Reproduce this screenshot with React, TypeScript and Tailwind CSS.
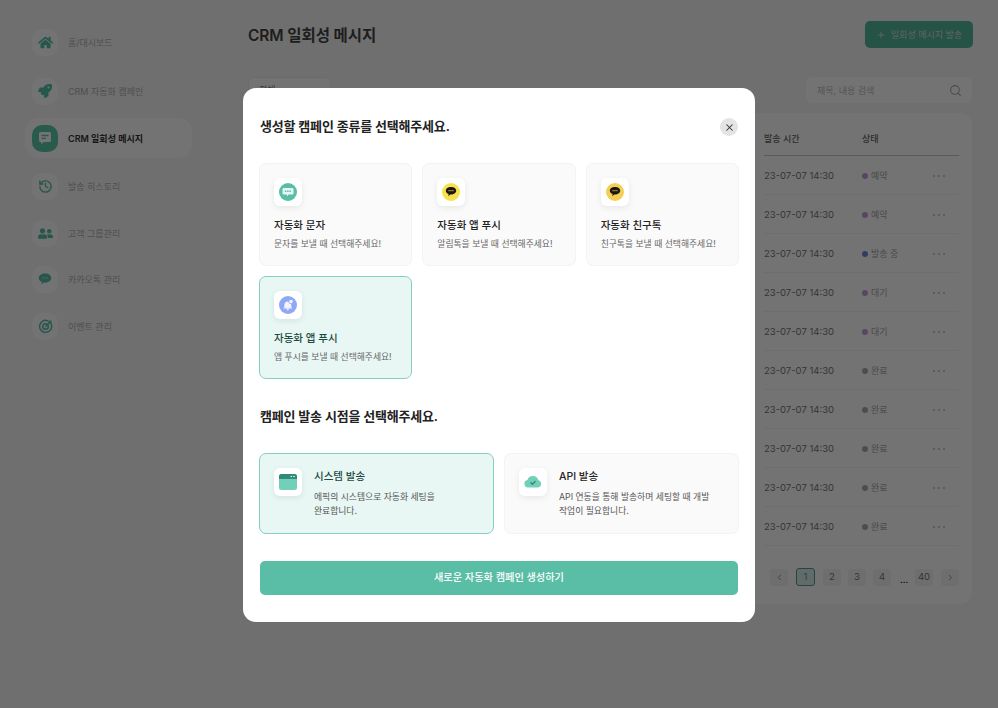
import { useState } from 'react';
import { Plus, Search, X, ChevronLeft, ChevronRight, History } from 'lucide-react';
import { FaHome, FaRocket, FaUserFriends } from 'react-icons/fa';

const font = { fontFamily: 'Inter, "Noto Sans CJK KR", sans-serif' };

const Message = () => (
  <svg width="16" height="16" viewBox="0 0 16 16">
    <path d="M3.500 2h9A1.500 1.500 0 0 1 14 3.500v7a1.500 1.500 0 0 1-1.500 1.500H7l-3 2v-2h-.5A1.500 1.500 0 0 1 2 10.500v-7A1.500 1.500 0 0 1 3.500 2z" fill="#fff" />
    <path d="M5 5.500h6M5 8.300h3.500" stroke="#5cc9ab" strokeWidth="1.300" strokeLinecap="round" />
  </svg>
);

const TalkBubble = () => (
  <svg width="14" height="14" viewBox="0 0 14 14">
    <path d="M7 1.500c3.500 0 6.300 2 6.300 4.600S10.500 10.700 7 10.700c-.5 0-1 0-1.400-.1L3.500 12.600l.3-2.500C1.900 9.300.7 7.800.7 6.100.7 3.500 3.500 1.500 7 1.500z" fill="#55c0a4" />
    <path d="M4 6h6" stroke="#cfeee5" strokeWidth="1.200" strokeDasharray="1.500 .8" />
  </svg>
);

const Aim = () => (
  <svg width="15" height="15" viewBox="0 0 15 15" fill="none" stroke="#55c0a4" strokeWidth="1.500" strokeLinecap="round">
    <path d="M9.500 1.700A6 6 0 1 0 13.300 5.500" />
    <circle cx="7.500" cy="7.500" r="2.800" />
    <path d="M7.500 7.500L13 2M11 1.800v2.200h2.200" strokeWidth="1.300" />
  </svg>
);

const menu = [
  { label: '홈/대시보드', icon: <FaHome size={15} color="#55c0a4" />, mt: 'mt-0' },
  { label: 'CRM 자동화 캠페인', icon: <FaRocket size={14} color="#55c0a4" />, mt: 'mt-[9px]' },
  { label: 'CRM 일회성 메시지', icon: <Message />, mt: 'mt-[7px]', active: true },
  { label: '발송 히스토리', icon: <History size={15} color="#55c0a4" strokeWidth={2.2} />, mt: 'mt-[8px]' },
  { label: '고객 그룹관리', icon: <FaUserFriends size={15} color="#55c0a4" />, mt: 'mt-[7px]' },
  { label: '카카오톡 관리', icon: <TalkBubble />, mt: 'mt-[6px]' },
  { label: '이벤트 관리', icon: <Aim />, mt: 'mt-[7px]' },
];

const statuses = [
  { label: '예약', dot: 'bg-[#c79ae0]' },
  { label: '예약', dot: 'bg-[#c79ae0]' },
  { label: '발송 중', dot: 'bg-[#6a86e0]' },
  { label: '대기', dot: 'bg-[#c79ae0]' },
  { label: '대기', dot: 'bg-[#c79ae0]' },
  { label: '완료', dot: 'bg-[#aaaaaa]' },
  { label: '완료', dot: 'bg-[#aaaaaa]' },
  { label: '완료', dot: 'bg-[#aaaaaa]' },
  { label: '완료', dot: 'bg-[#aaaaaa]' },
  { label: '완료', dot: 'bg-[#aaaaaa]' },
];

const Sidebar = () => (
  <aside className="w-[248px] shrink-0 pt-[22px] pl-[25px]">
    {menu.map((m) => (
      <div
        key={m.label}
        className={`flex items-center gap-[10px] pl-[7px] w-[167px] h-[40px] ${m.mt} ${m.active ? 'bg-white rounded-[14px]' : ''}`}
      >
        <div
          className={`w-[26px] h-[27px] rounded-[10px] flex items-center justify-center ${
            m.active ? 'bg-[#5cc9ab]' : 'bg-white'
          }`}
        >
          {m.icon}
        </div>
        <span className={`pt-[2px] text-[9px] ${m.active ? 'text-[#333] font-semibold' : 'text-[#b0b0b0]'}`}>{m.label}</span>
      </div>
    ))}
  </aside>
);

const Table = () => (
  <div className="mt-[10px] w-[724px] h-[491px] bg-white rounded-[12px] pl-[516px] pr-[13px] pt-[19px]">
    <div className="flex h-[24px] border-b border-[#c8c8c8] text-[9px] leading-[14px] text-[#666] font-medium">
      <span className="w-[98px]">발송 시간</span>
      <span>상태</span>
    </div>
    {statuses.map((s, i) => (
      <div key={i} className="flex items-center h-[39px] pt-[2px] border-b border-[#f1f1f1] text-[9.5px] text-[#777]">
        <span className="w-[98px]">23-07-07 14:30</span>
        <span className={`w-[6px] h-[6px] rounded-full ${s.dot}`} />
        <span className="ml-[3px] w-[62px] text-[9px] text-[#a6a6a6]">{s.label}</span>
        <span className="flex gap-[3px]">
          <i className="w-[2px] h-[2px] rounded-full bg-[#bbb]" />
          <i className="w-[2px] h-[2px] rounded-full bg-[#bbb]" />
          <i className="w-[2px] h-[2px] rounded-full bg-[#bbb]" />
        </span>
      </div>
    ))}
    <div className="flex items-center mt-[22px] ml-[6px] text-[9.5px] text-[#777]">
      <span className="w-[18px] h-[17px] rounded-[3px] bg-[#f4f4f4] flex items-center justify-center"><ChevronLeft size={9} /></span>
      <span className="ml-[8px] w-[19px] h-[18px] rounded-[3px] bg-[#dceeea] border border-[#4a9d8b] text-[#4a9d8b] flex items-center justify-center">1</span>
      <span className="ml-[8px] w-[18px] h-[17px] rounded-[3px] bg-[#f4f4f4] flex items-center justify-center">2</span>
      <span className="ml-[7px] w-[18px] h-[17px] rounded-[3px] bg-[#f4f4f4] flex items-center justify-center">3</span>
      <span className="ml-[7px] w-[18px] h-[17px] rounded-[3px] bg-[#f4f4f4] flex items-center justify-center">4</span>
      <span className="w-[24px] pl-[9px] text-black self-end leading-[12px]">...</span>
      <span className="w-[18px] h-[17px] rounded-[3px] bg-[#f4f4f4] flex items-center justify-center">40</span>
      <span className="ml-[8px] w-[18px] h-[17px] rounded-[3px] bg-[#f4f4f4] flex items-center justify-center"><ChevronRight size={9} /></span>
    </div>
  </div>
);

const IconBox = ({ children }: { children: React.ReactNode }) => (
  <div className="w-[28px] h-[28px] rounded-[6px] bg-white shadow-[0_2px_6px_rgba(0,0,0,0.08)] flex items-center justify-center shrink-0">
    {children}
  </div>
);

const Sms = () => (
  <svg width="18" height="18" viewBox="0 0 18 18">
    <circle cx="9" cy="9" r="9" fill="#5abda6" />
    <path d="M4.500 5h9a1 1 0 0 1 1 1v4.500a1 1 0 0 1-1 1H9.500L8 13.500v-2H4.500a1 1 0 0 1-1-1V6a1 1 0 0 1 1-1z" fill="#e6f6f2" />
    <path d="M5.800 8.200h6.400" stroke="#5abda6" strokeWidth="1.600" strokeDasharray="1.500 .8" />
  </svg>
);

const Kakao = ({ bg }: { bg: string }) => (
  <svg width="18" height="18" viewBox="0 0 18 18">
    <circle cx="9" cy="9" r="9" fill={bg} />
    <path d="M9 4c2.900 0 5.200 1.600 5.200 3.700S11.900 11.400 9 11.400h-.8L6.300 13.300l.3-2.300C5 10.400 3.800 9.200 3.800 7.700 3.800 5.600 6.100 4 9 4z" fill="#1c1710" />
    <path d="M6.500 7.700h5" stroke={bg} strokeWidth="1" strokeDasharray="1.200 .7" />
  </svg>
);

const Bell = () => (
  <svg width="18" height="18" viewBox="0 0 18 18">
    <circle cx="9" cy="9" r="9" fill="#8fa8f5" />
    <path d="M8.800 5.600c-2.200 0-3.500 1.700-3.500 3.700v1.800l-1 1.400h9l-1-1.400V9.300c0-2-1.300-3.700-3.500-3.700z" fill="#f1f4ff" />
    <circle cx="12" cy="5.600" r="2.500" fill="#8fa8f5" />
    <circle cx="12" cy="5.600" r="1.800" fill="#f1f4ff" />
    <circle cx="8.800" cy="13.300" r="1.100" fill="#f1f4ff" />
  </svg>
);

const BrowserIcon = () => (
  <svg width="18" height="18" viewBox="0 0 18 18">
    <rect y="1" width="18" height="16" rx="2.500" fill="#72cfb8" />
    <path d="M0 6V3.500A2.500 2.500 0 0 1 2.500 1h13A2.500 2.500 0 0 1 18 3.500V6z" fill="#2f8a77" />
    <circle cx="12.300" cy="3.500" r=".8" fill="#e8f7f4" />
    <circle cx="15" cy="3.500" r=".8" fill="#e8f7f4" />
  </svg>
);

const CloudCheck = () => (
  <svg width="18" height="18" viewBox="0 0 18 18">
    <path d="M4 14.500a3.800 3.800 0 0 1-.6-7.500 5.700 5.700 0 0 1 11 .3A3.700 3.700 0 0 1 14 14.500z" fill="#72cfb8" />
    <path d="M6.800 9.800l1.600 1.500 2.800-2.800" stroke="#2f8a77" strokeWidth="1.300" fill="none" strokeLinecap="round" strokeLinejoin="round" />
  </svg>
);

const types = [
  { title: '자동화 문자', desc: '문자를 보낼 때 선택해주세요!', icon: <Sms /> },
  { title: '자동화 앱 푸시', desc: '알림톡을 보낼 때 선택해주세요!', icon: <Kakao bg="#f7e14e" /> },
  { title: '자동화 친구톡', desc: '친구톡을 보낼 때 선택해주세요!', icon: <Kakao bg="#f5cf55" /> },
  { title: '자동화 앱 푸시', desc: '앱 푸시를 보낼 때 선택해주세요!', icon: <Bell /> },
];

const timings = [
  {
    title: '시스템 발송',
    desc: ['에픽의 시스템으로 자동화 세팅을', '완료합니다.'],
    icon: <BrowserIcon />,
  },
  {
    title: 'API 발송',
    desc: ['API 연동을 통해 발송하며 세팅할 때 개발', '작업이 필요합니다.'],
    icon: <CloudCheck />,
  },
];

const Modal = () => {
  const [type, setType] = useState(3);
  const [timing, setTiming] = useState(0);

  return (
    <div className="fixed inset-0 bg-black/55 flex items-center justify-center pt-[2px]">
      <div className="w-[512px] h-[534px] bg-white rounded-[13px] px-[16px] pt-[30px]">
        <div className="flex items-center justify-between h-[18px]">
          <h2 className="pl-[1px] text-[13px] font-semibold text-[#222] tracking-[-0.2px]">생성할 캠페인 종류를 선택해주세요.</h2>
          <button className="mr-[1px] w-[18px] h-[18px] rounded-full bg-[#e4e4e4] flex items-center justify-center">
            <X size={11} color="#333" strokeWidth={2.2} />
          </button>
        </div>

        <div className="grid grid-cols-3 gap-[10px] mt-[27px]">
          {types.map((t, i) => (
            <div
              key={i}
              onClick={() => setType(i)}
              className={`h-[103px] rounded-[7px] border pl-[14px] pt-[14px] ${
                type === i ? 'bg-[#e8f7f4] border-[#85cfbf]' : 'bg-[#fafafa] border-[#f3f3f3]'
              }`}
            >
              <IconBox>{t.icon}</IconBox>
              <p className={`mt-[12px] text-[10.5px] font-medium leading-[16px] ${type === i ? 'text-[#1d4a3f]' : 'text-[#222]'}`}>{t.title}</p>
              <p className="mt-[3px] text-[8.8px] leading-[14px] text-[#666]">{t.desc}</p>
            </div>
          ))}
        </div>

        <h2 className="mt-[28px] pl-[1px] text-[13px] leading-[18px] font-semibold text-[#222] tracking-[-0.2px]">캠페인 발송 시점을 선택해주세요.</h2>

        <div className="grid grid-cols-2 gap-[10px] mt-[28px]">
          {timings.map((t, i) => (
            <div
              key={t.title}
              onClick={() => setTiming(i)}
              className={`h-[81px] rounded-[7px] border flex gap-[12px] pl-[14px] pt-[14px] ${
                timing === i ? 'bg-[#e8f7f4] border-[#85cfbf]' : 'bg-[#fafafa] border-[#f3f3f3]'
              }`}
            >
              <IconBox>{t.icon}</IconBox>
              <div className="pt-[1px]">
                <p className={`text-[10.5px] font-medium leading-[16px] ${timing === i ? 'text-[#1d4a3f]' : 'text-[#222]'}`}>{t.title}</p>
                <p className="mt-[5px] text-[8.8px] leading-[14px] text-[#555]">
                  {t.desc[0]}
                  <br />
                  {t.desc[1]}
                </p>
              </div>
            </div>
          ))}
        </div>

        <button className="mt-[27px] w-[478px] ml-[1px] h-[34px] rounded-[5px] bg-[#5abda6] text-white text-[10.2px] font-medium">
          새로운 자동화 캠페인 생성하기
        </button>
      </div>
    </div>
  );
};

export default function App() {
  return (
    <div style={font} className="relative flex h-screen overflow-hidden bg-[#f7f7f7]">
      <Sidebar />
      <main className="flex-1 pt-[21px]">
        <div className="flex items-center justify-between w-[725px] h-[27px]">
          <h1 className="pt-[2px] text-[15.5px] font-semibold text-[#444] tracking-[-0.1px]">CRM 일회성 메시지</h1>
          <button className="w-[108px] h-[27px] rounded-[5px] bg-[#52b89c] text-[#ddd] text-[9px] flex items-center justify-center gap-[5px]">
            <Plus size={10} />
            일회성 메시지 발송
          </button>
        </div>
        <div className="flex justify-between w-[724px] mt-[29px]">
          <div className="w-[83px] h-[26px] bg-white rounded-[5px] border border-[#eee] text-[9px] px-[10px] leading-[24px] text-[#888]">전체</div>
          <div className="w-[166px] h-[26px] bg-white rounded-[6px] flex items-center justify-between pl-[11px] pr-[10px] text-[9px] text-[#bbb]">
            <span className="pt-[2px]">제목, 내용 검색</span>
            <Search size={13} color="#aaa" />
          </div>
        </div>
        <Table />
      </main>
      <Modal />
    </div>
  );
}
